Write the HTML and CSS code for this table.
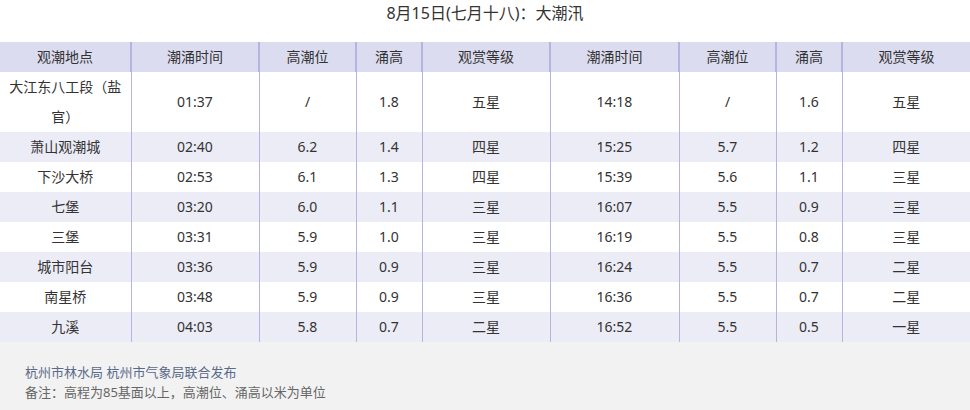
FILE: index.html
```html
<!DOCTYPE html>
<html lang="zh-CN">
<head>
<meta charset="utf-8">
<link rel="stylesheet" href="styles.css">
</head>
<body>
<div class="page">
  <div class="title">8月15日(七月十八)：大潮汛</div>
  <table class="tide">
    <colgroup>
      <col class="c1"><col class="c2"><col class="c3"><col class="c4"><col class="c5">
      <col class="c6"><col class="c3"><col class="c4"><col class="c5">
    </colgroup>
    <thead>
      <tr><th>观潮地点</th><th>潮涌时间</th><th>高潮位</th><th>涌高</th><th>观赏等级</th><th>潮涌时间</th><th>高潮位</th><th>涌高</th><th>观赏等级</th></tr>
    </thead>
    <tbody>
      <tr><td>大江东八工段（盐官）</td><td>01:37</td><td>/</td><td>1.8</td><td>五星</td><td>14:18</td><td>/</td><td>1.6</td><td>五星</td></tr>
      <tr><td>萧山观潮城</td><td>02:40</td><td>6.2</td><td>1.4</td><td>四星</td><td>15:25</td><td>5.7</td><td>1.2</td><td>四星</td></tr>
      <tr><td>下沙大桥</td><td>02:53</td><td>6.1</td><td>1.3</td><td>四星</td><td>15:39</td><td>5.6</td><td>1.1</td><td>三星</td></tr>
      <tr><td>七堡</td><td>03:20</td><td>6.0</td><td>1.1</td><td>三星</td><td>16:07</td><td>5.5</td><td>0.9</td><td>三星</td></tr>
      <tr><td>三堡</td><td>03:31</td><td>5.9</td><td>1.0</td><td>三星</td><td>16:19</td><td>5.5</td><td>0.8</td><td>三星</td></tr>
      <tr><td>城市阳台</td><td>03:36</td><td>5.9</td><td>0.9</td><td>三星</td><td>16:24</td><td>5.5</td><td>0.7</td><td>二星</td></tr>
      <tr><td>南星桥</td><td>03:48</td><td>5.9</td><td>0.9</td><td>三星</td><td>16:36</td><td>5.5</td><td>0.7</td><td>二星</td></tr>
      <tr><td>九溪</td><td>04:03</td><td>5.8</td><td>0.7</td><td>二星</td><td>16:52</td><td>5.5</td><td>0.5</td><td>一星</td></tr>
    </tbody>
  </table>
  <div class="footer">
    <div class="src">杭州市林水局 杭州市气象局联合发布</div>
    <div class="note">备注：高程为85基面以上，高潮位、涌高以米为单位</div>
  </div>
</div>
</body>
</html>
```

FILE: styles.css
```css
html, body {
  margin: 0;
  padding: 0;
  background: #ffffff;
}
body {
  font-family: "Noto Sans", "Noto Sans CJK SC", sans-serif;
  color: #333333;
}
.page {
  width: 970px;
  height: 410px;
  display: flex;
  flex-direction: column;
}
.title {
  height: 42px;
  box-sizing: border-box;
  padding-top: 2px;
  line-height: 22px;
  font-size: 16px;
  text-align: center;
  color: #333333;
}
.tide {
  width: 970px;
  border-collapse: collapse;
  table-layout: fixed;
  font-size: 14px;
}
.c1 { width: 131px; }
.c2 { width: 128px; }
.c3 { width: 97px; }
.c4 { width: 66px; }
.c5 { width: 128px; }
.c6 { width: 129px; }
.tide th, .tide td {
  padding: 0 6px;
  text-align: center;
  font-weight: normal;
  line-height: 30px;
  height: 30px;
  box-sizing: border-box;
  vertical-align: middle;
}
.tide th {
  background: #dcdcf0;
  border-left: 2px solid #b4b4e0;
}
.tide td {
  border-left: 1px solid #b4b4e0;
}
.tide th:first-child, .tide td:first-child {
  border-left: none;
}
.tide tbody tr:nth-child(odd) td { background: #ffffff; }
.tide tbody tr:nth-child(even) td { background: #ececf6; }
.footer {
  flex: 1;
  background: #f2f2f2;
  padding: 20px 0 0 25px;
  font-size: 13px;
  line-height: 20px;
}
.src { color: #5a6a8a; }
.note { color: #666666; }
```
